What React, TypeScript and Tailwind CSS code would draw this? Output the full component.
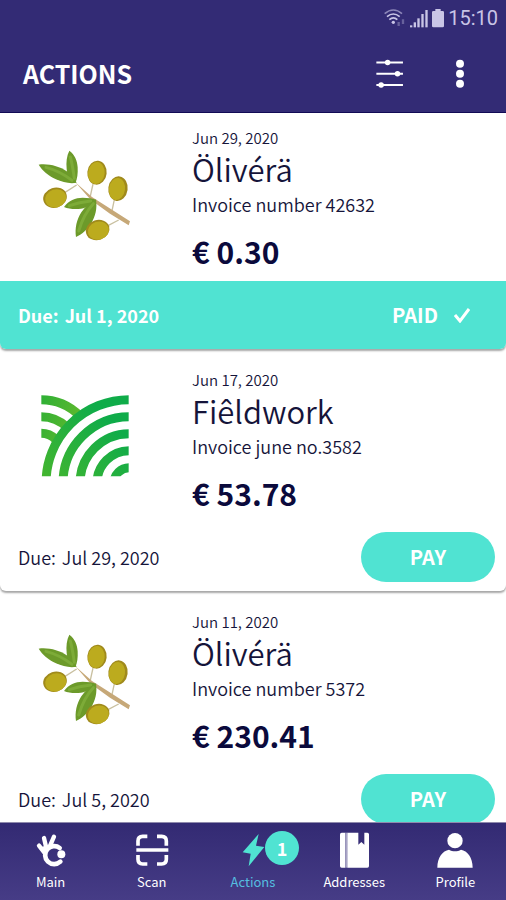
import type { ReactNode } from "react";

interface Invoice {
    id: number;
    vendor: string;
    logo: "olive" | "field";
    date: string;
    reference: string;
    amount: string;
    due: string;
    paid: boolean;
}

interface Tab {
    label: string;
    icon: ReactNode;
    badge?: number;
    active?: boolean;
}

const invoices: Invoice[] = [
    { id: 1, vendor: "Ölivérä", logo: "olive", date: "Jun 29, 2020", reference: "Invoice number 42632", amount: "€ 0.30", due: "Jul 1, 2020", paid: true },
    { id: 2, vendor: "Fiêldwork", logo: "field", date: "Jun 17, 2020", reference: "Invoice june no.3582", amount: "€ 53.78", due: "Jul 29, 2020", paid: false },
    { id: 3, vendor: "Ölivérä", logo: "olive", date: "Jun 11, 2020", reference: "Invoice number 5372", amount: "€ 230.41", due: "Jul 5, 2020", paid: false },
];

function OliveLogo() {
    return (
        <svg viewBox="48 60 288 288" className="size-24" aria-hidden="true">
            <g fill="none" stroke="#c9c0a0" strokeWidth="4">
                <path d="M134 191 L170 168" />
                <path d="M219 165 L210 206" />
                <path d="M283 212 L275 250" />
                <path d="M264 290 L296 273" />
            </g>
            <path d="M166 160 L216 204 L330 277 L326 289 L270 254 L212 212 Z" fill="#c6a878" />
            <g fill="#6c9a2a">
                <path d="M56 107 C85 103 118 112 140 127 C154 137 164 148 170 161 C150 165 128 160 108 151 C86 141 66 124 56 107 Z" />
                <path d="M148 65 C164 77 172 95 173 115 C174 134 172 150 166 162 C150 156 142 140 140 120 C138 100 140 80 148 65 Z" />
                <path d="M132 234 C146 214 166 206 188 206 C204 206 218 208 229 212 C215 229 196 238 175 240 C158 241 144 239 132 234 Z" />
                <path d="M168 324 C164 298 170 272 184 250 C196 232 210 219 228 212 C232 238 226 262 214 282 C202 302 188 315 168 324 Z" />
            </g>
            <g fill="none" stroke="#7dab38" strokeWidth="9" strokeLinecap="round">
                <path d="M78 115 C105 122 135 138 156 154" />
                <path d="M151 84 C158 110 160 130 163 148" />
                <path d="M148 230 C170 222 190 218 212 216" />
                <path d="M176 306 C186 272 200 245 220 224" />
            </g>
            <g fill="#a08a1c">
                <ellipse cx="105" cy="206" rx="36" ry="30" transform="rotate(-18 105 206)" />
                <ellipse cx="231" cy="131" rx="29" ry="36" transform="rotate(6 231 131)" />
                <ellipse cx="294" cy="179" rx="29" ry="37" transform="rotate(8 294 179)" />
                <ellipse cx="233" cy="303" rx="36" ry="30" transform="rotate(-18 233 303)" />
            </g>
            <g fill="#bcab1e">
                <ellipse cx="107" cy="208" rx="32" ry="27" transform="rotate(-18 107 208)" />
                <ellipse cx="229" cy="132" rx="25" ry="33" transform="rotate(6 229 132)" />
                <ellipse cx="291" cy="180" rx="24" ry="33" transform="rotate(8 291 180)" />
                <ellipse cx="235" cy="305" rx="32" ry="27" transform="rotate(-18 235 305)" />
            </g>
        </svg>
    );
}

function FieldLogo() {
    return (
        <svg viewBox="48 36 288 288" className="size-24" aria-hidden="true">
            <defs>
                <clipPath id="field-clip">
                    <rect x="64" y="48" width="262" height="244" />
                </clipPath>
                <linearGradient id="field-green" gradientUnits="userSpaceOnUse" x1="70" y1="292" x2="250" y2="110">
                    <stop offset="0" stopColor="#43b52f" />
                    <stop offset="1" stopColor="#0fac49" />
                </linearGradient>
                <linearGradient id="field-light" gradientUnits="userSpaceOnUse" x1="64" y1="60" x2="180" y2="100">
                    <stop offset="0" stopColor="#2fb035" />
                    <stop offset="1" stopColor="#5cb82e" />
                </linearGradient>
            </defs>
            <g clipPath="url(#field-clip)" fill="none" strokeWidth="27">
                <g stroke="url(#field-light)">
                    <path d="M63 62 A164 164 0 0 1 227 226" />
                    <path d="M63 113 A113 113 0 0 1 176 226" />
                    <path d="M63 163 A63 63 0 0 1 126 226" />
                </g>
                <circle cx="328" cy="312" r="250" fill="#fff" stroke="url(#field-green)" />
                <g stroke="url(#field-green)">
                    <circle cx="328" cy="312" r="199" />
                    <circle cx="328" cy="312" r="148" />
                    <circle cx="328" cy="312" r="97" />
                    <circle cx="328" cy="312" r="46" />
                </g>
            </g>
        </svg>
    );
}

const tabs: Tab[] = [
    {
        label: "Main",
        icon: (
            <svg viewBox="98 50 108 108" className="size-9" fill="none" stroke="currentColor" strokeLinecap="round">
                <path d="M116 91 L134 114" strokeWidth="13" />
                <path d="M131 68 L138 98" strokeWidth="13" />
                <path d="M161 64 L148 94" strokeWidth="13" />
                <path d="M126 96 L150 90 L136 112 Z" fill="currentColor" strokeWidth="4" />
                <path d="M178 98 A27 27 0 1 0 180 139" strokeWidth="14" />
                <circle cx="183" cy="117" r="12" fill="currentColor" stroke="none" />
            </svg>
        ),
    },
    {
        label: "Scan",
        icon: (
            <svg viewBox="402 50 108 108" className="size-9" fill="none" stroke="currentColor" strokeWidth="11">
                <path d="M414 91 V77 Q414 63 428 63 H442" />
                <path d="M471 63 H485 Q499 63 499 77 V91" />
                <path d="M414 119 V132 Q414 146 428 146 H442" />
                <path d="M471 146 H485 Q499 146 499 132 V119" />
                <path d="M409 104 H505" />
            </svg>
        ),
    },
    {
        label: "Actions",
        active: true,
        badge: 1,
        icon: (
            <svg viewBox="45 50 108 108" className="size-9" fill="currentColor">
                <path d="M116 56 L68 111 L92 115 L86 153 L133 95 L108 91 Z" />
            </svg>
        ),
    },
    {
        label: "Addresses",
        icon: (
            <svg viewBox="348 50 108 108" className="size-9" fill="currentColor">
                <path d="M365 52 H376 V157 H365 Q360 157 360 152 V57 Q360 52 365 52 Z" />
                <path d="M376 52 H382 V157 H376 Z" fill="#a9a5c6" />
                <path d="M382 52 H415 V88 L424 80 L433 88 V52 H442 Q447 52 447 57 V152 Q447 157 442 157 H382 Z" />
            </svg>
        ),
    },
    {
        label: "Profile",
        icon: (
            <svg viewBox="654 50 108 108" className="size-9" fill="currentColor">
                <circle cx="708" cy="76" r="23" />
                <path d="M655 157 C655 126 671 106 690 103 C701 109 715 109 726 103 C745 106 761 126 761 157 Z" />
            </svg>
        ),
    },
];

function StatusBar() {
    return (
        <div className="flex h-9 items-center justify-end gap-1 pr-2 text-[#c9c5e6]">
            <svg viewBox="44 24 66 56" className="h-5 w-[22px]" fill="none" stroke="currentColor" strokeWidth="5" aria-hidden="true">
                <path d="M46 39 Q72 17 98 39" strokeOpacity="0.6" />
                <path d="M53 48 Q72 32 91 48" />
                <path d="M60 57 Q72 46 84 57" />
                <circle cx="72" cy="65" r="5" fill="currentColor" stroke="none" />
                <path d="M88 64 V76 M101 56 V70" strokeOpacity="0.35" strokeWidth="7" />
            </svg>
            <svg viewBox="120 24 54 56" className="h-5 w-[18px]" fill="currentColor" aria-hidden="true">
                <rect x="120" y="74" width="7" height="6" />
                <rect x="131" y="65" width="7" height="15" />
                <rect x="142" y="53" width="7" height="27" />
                <rect x="154" y="40" width="7" height="40" />
                <rect x="166" y="28" width="7" height="52" />
            </svg>
            <svg viewBox="188 24 36 56" className="h-5 w-3" fill="currentColor" aria-hidden="true">
                <path d="M198 25 H214 V31 H220 Q224 31 224 35 V76 Q224 80 220 80 H192 Q188 80 188 76 V35 Q188 31 192 31 H198 Z" />
            </svg>
            <span className="font-[Roboto,sans-serif] text-xl leading-5">15:10</span>
        </div>
    );
}

function InvoiceCard({ invoice }: { invoice: Invoice }) {
    return (
        <article className="overflow-hidden rounded-b-md bg-white shadow-[0_2px_2px_rgba(0,0,0,0.35)]">
            <div className="flex h-[168px] gap-[60px] pl-9">
                <div className="pt-9">{invoice.logo === "olive" ? <OliveLogo /> : <FieldLogo />}</div>
                <div className="pt-4 font-[350] text-[#15143a]">
                    <p className="text-[15px] leading-[18px]">{invoice.date}</p>
                    <h2 className="text-[31px] leading-11">{invoice.vendor}</h2>
                    <p className="text-lg leading-[26px]">{invoice.reference}</p>
                    <p className="pt-3 text-3xl leading-11 font-bold text-[#0b0a3c]">{invoice.amount}</p>
                </div>
            </div>
            {invoice.paid ? (
                <div className="flex h-[68px] items-center justify-between bg-[#50e3d2] pr-9 pl-[18px] font-bold text-white">
                    <p className="flex gap-1.5 text-lg">
                        <span>Due:</span>
                        <span>{invoice.due}</span>
                    </p>
                    <p className="flex items-center gap-4 text-xl">
                        PAID
                        <svg viewBox="0 0 16 16" className="size-4" fill="none" stroke="currentColor" strokeWidth="3" aria-hidden="true">
                            <path d="M1 8 L6 14 L15 2" />
                        </svg>
                    </p>
                </div>
            ) : (
                <div className="flex h-[68px] items-center justify-between pr-[11px] pl-[18px] text-[#15143a]">
                    <p className="flex gap-1.5 text-lg font-[350]">
                        <span>Due:</span>
                        <span>{invoice.due}</span>
                    </p>
                    <button className="h-[50px] w-[134px] rounded-full bg-[#50e3d2] text-xl font-bold text-white">PAY</button>
                </div>
            )}
        </article>
    );
}

export default function App() {
    return (
        <div className="flex h-screen flex-col bg-white font-['Noto_Sans_CJK_JP','Noto_Sans',sans-serif]">
            <header className="h-[113px] shrink-0 border-b border-[#120a55] bg-[#332b75] text-white">
                <StatusBar />
                <div className="flex h-[76px] items-center justify-between pr-[38px] pl-[23px]">
                    <h1 className="text-[25px] font-bold">ACTIONS</h1>
                    <div className="flex items-center gap-12">
                        <button aria-label="Filter">
                            <svg viewBox="20 178 80 88" className="h-[30px] w-7" fill="currentColor">
                                <path d="M20 185 H98 V191 H20 Z M20 218 H98 V224 H20 Z M20 251 H98 V257 H20 Z" />
                                <circle cx="53" cy="188" r="8" />
                                <circle cx="82" cy="221" r="8" />
                                <circle cx="34" cy="254" r="8" />
                            </svg>
                        </button>
                        <button aria-label="More">
                            <svg viewBox="246 178 48 88" className="h-[30px] w-4" fill="currentColor">
                                <circle cx="270" cy="191" r="12" />
                                <circle cx="270" cy="221" r="12" />
                                <circle cx="270" cy="251" r="12" />
                            </svg>
                        </button>
                    </div>
                </div>
            </header>

            <main className="flex-1 space-y-1.5 overflow-y-auto [scrollbar-width:none]">
                {invoices.map(invoice => (
                    <InvoiceCard key={invoice.id} invoice={invoice} />
                ))}
            </main>

            <nav className="grid h-[78px] shrink-0 grid-cols-5 border-t border-[#8f8aad] bg-linear-to-b from-[#332a73] to-[#463c86]">
                {tabs.map(tab => (
                    <a
                        key={tab.label}
                        href={`#${tab.label.toLowerCase()}`}
                        className={`relative flex flex-col items-center pt-[9px] ${tab.active ? "text-[#50e3d2]" : "text-white"}`}
                    >
                        {tab.icon}
                        {tab.badge && (
                            <span className="absolute top-2 left-1/2 ml-3 flex size-[34px] items-center justify-center rounded-full bg-[#50e3d2] text-lg font-bold text-white">
                                {tab.badge}
                            </span>
                        )}
                        <span className={`pt-1 text-[13px] leading-5 ${tab.active ? "text-[#55bfe0]" : ""}`}>{tab.label}</span>
                    </a>
                ))}
            </nav>
        </div>
    );
}
